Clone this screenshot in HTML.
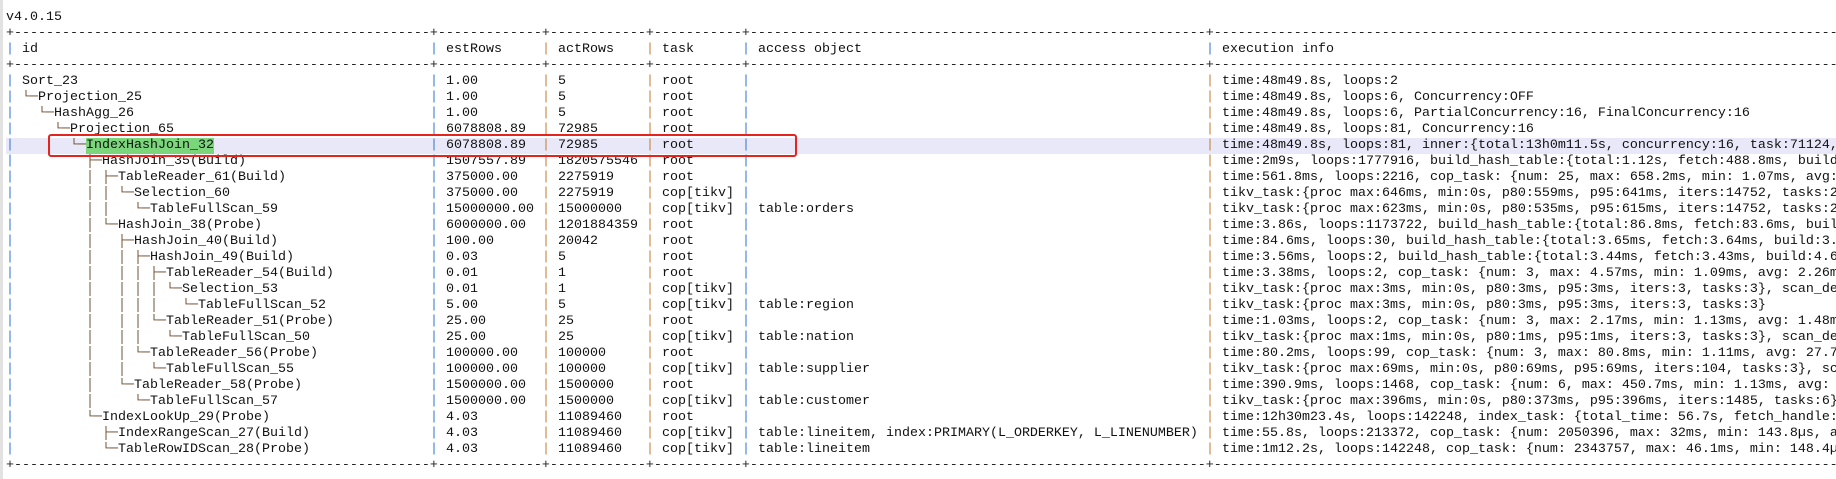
<!DOCTYPE html>
<html><head><meta charset="utf-8">
<style>
html,body{margin:0;padding:0;background:#fff;width:1836px;height:479px;overflow:hidden;position:relative}
body{font-family:"Liberation Mono","DejaVu Sans Mono",monospace;font-size:13.333px;color:#111}
.strip{position:absolute;left:0;top:0;width:3px;height:479px;background:#e2e2e2}
.r{position:absolute;left:0;height:16px;line-height:16px;width:1836px;white-space:pre;overflow:hidden}
.c{position:absolute;top:0;white-space:pre}
.b{color:#3d7fd0}.o{color:#c8833a}
.t{color:#6a4a2a}
.d{position:absolute;top:0;left:6px;white-space:pre;color:#222}
.hl{position:absolute;left:6px;top:138px;width:1830px;height:16px;background:#e8e8f8}
.gr{position:absolute;left:86px;top:138px;width:128px;height:16px;background:#7bd67b}
.red{position:absolute;left:48px;top:134px;width:745px;height:19px;border:2.5px solid #e52420;border-radius:3px}
</style></head><body>
<div class="strip"></div>
<div class="hl"></div><div class="gr"></div>
<div class="r" style="top:10px"><span class="c" style="left:6px">v4.0.15</span></div>

<div class="r" style="top:26px"><span class="d">+----------------------------------------------------+-------------+------------+-----------+---------------------------------------------------------+-----------------------------------------------------------------------------------</span></div>
<div class="r" style="top:42px"><span class="c" style="left:6px"><span class="b">|</span> id</span><span class="c" style="left:430px"><span class="b">|</span> estRows</span><span class="c" style="left:542px"><span class="o">|</span> actRows</span><span class="c" style="left:646px"><span class="o">|</span> task</span><span class="c" style="left:742px"><span class="b">|</span> access object</span><span class="c" style="left:1206px"><span class="b">|</span> execution info</span></div>
<div class="r" style="top:58px"><span class="d">+----------------------------------------------------+-------------+------------+-----------+---------------------------------------------------------+-----------------------------------------------------------------------------------</span></div>

<div class="r" style="top:74px"><span class="c" style="left:6px"><span class="b">|</span> Sort_23</span><span class="c" style="left:430px"><span class="b">|</span> 1.00</span><span class="c" style="left:542px"><span class="o">|</span> 5</span><span class="c" style="left:646px"><span class="o">|</span> root</span><span class="c" style="left:742px"><span class="b">|</span></span><span class="c" style="left:1206px"><span class="o">|</span> time:48m49.8s, loops:2</span></div>
<div class="r" style="top:90px"><span class="c" style="left:6px"><span class="b">|</span> <span class="t">└─</span>Projection_25</span><span class="c" style="left:430px"><span class="b">|</span> 1.00</span><span class="c" style="left:542px"><span class="o">|</span> 5</span><span class="c" style="left:646px"><span class="o">|</span> root</span><span class="c" style="left:742px"><span class="b">|</span></span><span class="c" style="left:1206px"><span class="o">|</span> time:48m49.8s, loops:6, Concurrency:OFF</span></div>
<div class="r" style="top:106px"><span class="c" style="left:6px"><span class="b">|</span>   <span class="t">└─</span>HashAgg_26</span><span class="c" style="left:430px"><span class="b">|</span> 1.00</span><span class="c" style="left:542px"><span class="o">|</span> 5</span><span class="c" style="left:646px"><span class="o">|</span> root</span><span class="c" style="left:742px"><span class="b">|</span></span><span class="c" style="left:1206px"><span class="o">|</span> time:48m49.8s, loops:6, PartialConcurrency:16, FinalConcurrency:16</span></div>
<div class="r" style="top:122px"><span class="c" style="left:6px"><span class="b">|</span>     <span class="t">└─</span>Projection_65</span><span class="c" style="left:430px"><span class="b">|</span> 6078808.89</span><span class="c" style="left:542px"><span class="o">|</span> 72985</span><span class="c" style="left:646px"><span class="o">|</span> root</span><span class="c" style="left:742px"><span class="b">|</span></span><span class="c" style="left:1206px"><span class="o">|</span> time:48m49.8s, loops:81, Concurrency:16</span></div>
<div class="r" style="top:138px"><span class="c" style="left:6px"><span class="b">|</span>       <span class="t">└─</span>IndexHashJoin_32</span><span class="c" style="left:430px"><span class="b">|</span> 6078808.89</span><span class="c" style="left:542px"><span class="o">|</span> 72985</span><span class="c" style="left:646px"><span class="o">|</span> root</span><span class="c" style="left:742px"><span class="b">|</span></span><span class="c" style="left:1206px"><span class="o">|</span> time:48m49.8s, loops:81, inner:{total:13h0m11.5s, concurrency:16, task:71124, construct:1.2s}</span></div>
<div class="r" style="top:154px"><span class="c" style="left:6px"><span class="b">|</span>         <span class="t">├─</span>HashJoin_35(Build)</span><span class="c" style="left:430px"><span class="b">|</span> 1507557.89</span><span class="c" style="left:542px"><span class="o">|</span> 1820575546</span><span class="c" style="left:646px"><span class="o">|</span> root</span><span class="c" style="left:742px"><span class="b">|</span></span><span class="c" style="left:1206px"><span class="o">|</span> time:2m9s, loops:1777916, build_hash_table:{total:1.12s, fetch:488.8ms, build:634ms}</span></div>
<div class="r" style="top:170px"><span class="c" style="left:6px"><span class="b">|</span>         <span class="t">│ ├─</span>TableReader_61(Build)</span><span class="c" style="left:430px"><span class="b">|</span> 375000.00</span><span class="c" style="left:542px"><span class="o">|</span> 2275919</span><span class="c" style="left:646px"><span class="o">|</span> root</span><span class="c" style="left:742px"><span class="b">|</span></span><span class="c" style="left:1206px"><span class="o">|</span> time:561.8ms, loops:2216, cop_task: {num: 25, max: 658.2ms, min: 1.07ms, avg: 300ms}</span></div>
<div class="r" style="top:186px"><span class="c" style="left:6px"><span class="b">|</span>         <span class="t">│ │ └─</span>Selection_60</span><span class="c" style="left:430px"><span class="b">|</span> 375000.00</span><span class="c" style="left:542px"><span class="o">|</span> 2275919</span><span class="c" style="left:646px"><span class="o">|</span> cop[tikv]</span><span class="c" style="left:742px"><span class="b">|</span></span><span class="c" style="left:1206px"><span class="o">|</span> tikv_task:{proc max:646ms, min:0s, p80:559ms, p95:641ms, iters:14752, tasks:25}</span></div>
<div class="r" style="top:202px"><span class="c" style="left:6px"><span class="b">|</span>         <span class="t">│ │   └─</span>TableFullScan_59</span><span class="c" style="left:430px"><span class="b">|</span> 15000000.00</span><span class="c" style="left:542px"><span class="o">|</span> 15000000</span><span class="c" style="left:646px"><span class="o">|</span> cop[tikv]</span><span class="c" style="left:742px"><span class="b">|</span> table:orders</span><span class="c" style="left:1206px"><span class="o">|</span> tikv_task:{proc max:623ms, min:0s, p80:535ms, p95:615ms, iters:14752, tasks:25}</span></div>
<div class="r" style="top:218px"><span class="c" style="left:6px"><span class="b">|</span>         <span class="t">│ └─</span>HashJoin_38(Probe)</span><span class="c" style="left:430px"><span class="b">|</span> 6000000.00</span><span class="c" style="left:542px"><span class="o">|</span> 1201884359</span><span class="c" style="left:646px"><span class="o">|</span> root</span><span class="c" style="left:742px"><span class="b">|</span></span><span class="c" style="left:1206px"><span class="o">|</span> time:3.86s, loops:1173722, build_hash_table:{total:86.8ms, fetch:83.6ms, build:3.2ms}</span></div>
<div class="r" style="top:234px"><span class="c" style="left:6px"><span class="b">|</span>         <span class="t">│   ├─</span>HashJoin_40(Build)</span><span class="c" style="left:430px"><span class="b">|</span> 100.00</span><span class="c" style="left:542px"><span class="o">|</span> 20042</span><span class="c" style="left:646px"><span class="o">|</span> root</span><span class="c" style="left:742px"><span class="b">|</span></span><span class="c" style="left:1206px"><span class="o">|</span> time:84.6ms, loops:30, build_hash_table:{total:3.65ms, fetch:3.64ms, build:3.1us}</span></div>
<div class="r" style="top:250px"><span class="c" style="left:6px"><span class="b">|</span>         <span class="t">│   │ ├─</span>HashJoin_49(Build)</span><span class="c" style="left:430px"><span class="b">|</span> 0.03</span><span class="c" style="left:542px"><span class="o">|</span> 5</span><span class="c" style="left:646px"><span class="o">|</span> root</span><span class="c" style="left:742px"><span class="b">|</span></span><span class="c" style="left:1206px"><span class="o">|</span> time:3.56ms, loops:2, build_hash_table:{total:3.44ms, fetch:3.43ms, build:4.6us}</span></div>
<div class="r" style="top:266px"><span class="c" style="left:6px"><span class="b">|</span>         <span class="t">│   │ │ ├─</span>TableReader_54(Build)</span><span class="c" style="left:430px"><span class="b">|</span> 0.01</span><span class="c" style="left:542px"><span class="o">|</span> 1</span><span class="c" style="left:646px"><span class="o">|</span> root</span><span class="c" style="left:742px"><span class="b">|</span></span><span class="c" style="left:1206px"><span class="o">|</span> time:3.38ms, loops:2, cop_task: {num: 3, max: 4.57ms, min: 1.09ms, avg: 2.26ms}</span></div>
<div class="r" style="top:282px"><span class="c" style="left:6px"><span class="b">|</span>         <span class="t">│   │ │ │ └─</span>Selection_53</span><span class="c" style="left:430px"><span class="b">|</span> 0.01</span><span class="c" style="left:542px"><span class="o">|</span> 1</span><span class="c" style="left:646px"><span class="o">|</span> cop[tikv]</span><span class="c" style="left:742px"><span class="b">|</span></span><span class="c" style="left:1206px"><span class="o">|</span> tikv_task:{proc max:3ms, min:0s, p80:3ms, p95:3ms, iters:3, tasks:3}, scan_detail: {}</span></div>
<div class="r" style="top:298px"><span class="c" style="left:6px"><span class="b">|</span>         <span class="t">│   │ │ │   └─</span>TableFullScan_52</span><span class="c" style="left:430px"><span class="b">|</span> 5.00</span><span class="c" style="left:542px"><span class="o">|</span> 5</span><span class="c" style="left:646px"><span class="o">|</span> cop[tikv]</span><span class="c" style="left:742px"><span class="b">|</span> table:region</span><span class="c" style="left:1206px"><span class="o">|</span> tikv_task:{proc max:3ms, min:0s, p80:3ms, p95:3ms, iters:3, tasks:3}</span></div>
<div class="r" style="top:314px"><span class="c" style="left:6px"><span class="b">|</span>         <span class="t">│   │ │ └─</span>TableReader_51(Probe)</span><span class="c" style="left:430px"><span class="b">|</span> 25.00</span><span class="c" style="left:542px"><span class="o">|</span> 25</span><span class="c" style="left:646px"><span class="o">|</span> root</span><span class="c" style="left:742px"><span class="b">|</span></span><span class="c" style="left:1206px"><span class="o">|</span> time:1.03ms, loops:2, cop_task: {num: 3, max: 2.17ms, min: 1.13ms, avg: 1.48ms}</span></div>
<div class="r" style="top:330px"><span class="c" style="left:6px"><span class="b">|</span>         <span class="t">│   │ │   └─</span>TableFullScan_50</span><span class="c" style="left:430px"><span class="b">|</span> 25.00</span><span class="c" style="left:542px"><span class="o">|</span> 25</span><span class="c" style="left:646px"><span class="o">|</span> cop[tikv]</span><span class="c" style="left:742px"><span class="b">|</span> table:nation</span><span class="c" style="left:1206px"><span class="o">|</span> tikv_task:{proc max:1ms, min:0s, p80:1ms, p95:1ms, iters:3, tasks:3}, scan_detail: {}</span></div>
<div class="r" style="top:346px"><span class="c" style="left:6px"><span class="b">|</span>         <span class="t">│   │ └─</span>TableReader_56(Probe)</span><span class="c" style="left:430px"><span class="b">|</span> 100000.00</span><span class="c" style="left:542px"><span class="o">|</span> 100000</span><span class="c" style="left:646px"><span class="o">|</span> root</span><span class="c" style="left:742px"><span class="b">|</span></span><span class="c" style="left:1206px"><span class="o">|</span> time:80.2ms, loops:99, cop_task: {num: 3, max: 80.8ms, min: 1.11ms, avg: 27.7ms}</span></div>
<div class="r" style="top:362px"><span class="c" style="left:6px"><span class="b">|</span>         <span class="t">│   │   └─</span>TableFullScan_55</span><span class="c" style="left:430px"><span class="b">|</span> 100000.00</span><span class="c" style="left:542px"><span class="o">|</span> 100000</span><span class="c" style="left:646px"><span class="o">|</span> cop[tikv]</span><span class="c" style="left:742px"><span class="b">|</span> table:supplier</span><span class="c" style="left:1206px"><span class="o">|</span> tikv_task:{proc max:69ms, min:0s, p80:69ms, p95:69ms, iters:104, tasks:3}, scan_detail</span></div>
<div class="r" style="top:378px"><span class="c" style="left:6px"><span class="b">|</span>         <span class="t">│   └─</span>TableReader_58(Probe)</span><span class="c" style="left:430px"><span class="b">|</span> 1500000.00</span><span class="c" style="left:542px"><span class="o">|</span> 1500000</span><span class="c" style="left:646px"><span class="o">|</span> root</span><span class="c" style="left:742px"><span class="b">|</span></span><span class="c" style="left:1206px"><span class="o">|</span> time:390.9ms, loops:1468, cop_task: {num: 6, max: 450.7ms, min: 1.13ms, avg: 200ms}</span></div>
<div class="r" style="top:394px"><span class="c" style="left:6px"><span class="b">|</span>         <span class="t">│     └─</span>TableFullScan_57</span><span class="c" style="left:430px"><span class="b">|</span> 1500000.00</span><span class="c" style="left:542px"><span class="o">|</span> 1500000</span><span class="c" style="left:646px"><span class="o">|</span> cop[tikv]</span><span class="c" style="left:742px"><span class="b">|</span> table:customer</span><span class="c" style="left:1206px"><span class="o">|</span> tikv_task:{proc max:396ms, min:0s, p80:373ms, p95:396ms, iters:1485, tasks:6}</span></div>
<div class="r" style="top:410px"><span class="c" style="left:6px"><span class="b">|</span>         <span class="t">└─</span>IndexLookUp_29(Probe)</span><span class="c" style="left:430px"><span class="b">|</span> 4.03</span><span class="c" style="left:542px"><span class="o">|</span> 11089460</span><span class="c" style="left:646px"><span class="o">|</span> root</span><span class="c" style="left:742px"><span class="b">|</span></span><span class="c" style="left:1206px"><span class="o">|</span> time:12h30m23.4s, loops:142248, index_task: {total_time: 56.7s, fetch_handle: 56.7s}</span></div>
<div class="r" style="top:426px"><span class="c" style="left:6px"><span class="b">|</span>           <span class="t">├─</span>IndexRangeScan_27(Build)</span><span class="c" style="left:430px"><span class="b">|</span> 4.03</span><span class="c" style="left:542px"><span class="o">|</span> 11089460</span><span class="c" style="left:646px"><span class="o">|</span> cop[tikv]</span><span class="c" style="left:742px"><span class="b">|</span> table:lineitem, index:PRIMARY(L_ORDERKEY, L_LINENUMBER)</span><span class="c" style="left:1206px"><span class="o">|</span> time:55.8s, loops:213372, cop_task: {num: 2050396, max: 32ms, min: 143.8µs, avg: 1ms}</span></div>
<div class="r" style="top:442px"><span class="c" style="left:6px"><span class="b">|</span>           <span class="t">└─</span>TableRowIDScan_28(Probe)</span><span class="c" style="left:430px"><span class="b">|</span> 4.03</span><span class="c" style="left:542px"><span class="o">|</span> 11089460</span><span class="c" style="left:646px"><span class="o">|</span> cop[tikv]</span><span class="c" style="left:742px"><span class="b">|</span> table:lineitem</span><span class="c" style="left:1206px"><span class="o">|</span> time:1m12.2s, loops:142248, cop_task: {num: 2343757, max: 46.1ms, min: 148.4µs, avg: 1ms}</span></div>
<div class="r" style="top:458px"><span class="d">+----------------------------------------------------+-------------+------------+-----------+---------------------------------------------------------+-----------------------------------------------------------------------------------</span></div>

<div class="red"></div>
</body></html>
